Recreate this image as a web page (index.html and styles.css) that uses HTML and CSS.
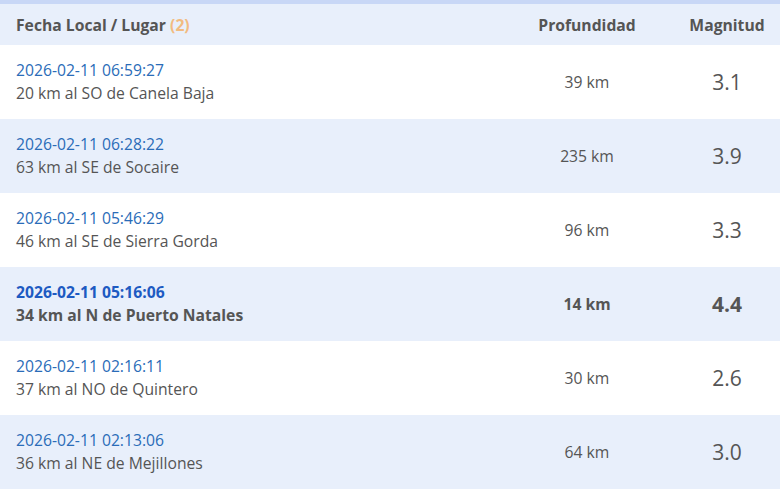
FILE: index.html
```html
<!DOCTYPE html>
<html lang="es">
<head>
    <meta charset="UTF-8">
    <meta name="viewport" content="width=device-width, initial-scale=1.0">
    <title>Sismos</title>
    <link rel="stylesheet" href="styles.css">
</head>
<body>
    <table class="sismos">
        <thead>
            <tr>
                <th class="lugar">Fecha Local / Lugar <span class="cuenta">(2)</span></th>
                <th class="prof">Profundidad</th>
                <th class="mag">Magnitud</th>
            </tr>
        </thead>
        <tbody>
            <tr>
                <td class="lugar"><a class="fecha">2026-02-11 06:59:27</a><br>20 km al SO de Canela Baja</td>
                <td class="prof">39 km</td>
                <td class="mag">3.1</td>
            </tr>
            <tr>
                <td class="lugar"><a class="fecha">2026-02-11 06:28:22</a><br>63 km al SE de Socaire</td>
                <td class="prof">235 km</td>
                <td class="mag">3.9</td>
            </tr>
            <tr>
                <td class="lugar"><a class="fecha">2026-02-11 05:46:29</a><br>46 km al SE de Sierra Gorda</td>
                <td class="prof">96 km</td>
                <td class="mag">3.3</td>
            </tr>
            <tr class="destacado">
                <td class="lugar"><a class="fecha">2026-02-11 05:16:06</a><br>34 km al N de Puerto Natales</td>
                <td class="prof">14 km</td>
                <td class="mag">4.4</td>
            </tr>
            <tr>
                <td class="lugar"><a class="fecha">2026-02-11 02:16:11</a><br>37 km al NO de Quintero</td>
                <td class="prof">30 km</td>
                <td class="mag">2.6</td>
            </tr>
            <tr>
                <td class="lugar"><a class="fecha">2026-02-11 02:13:06</a><br>36 km al NE de Mejillones</td>
                <td class="prof">64 km</td>
                <td class="mag">3.0</td>
            </tr>
        </tbody>
    </table>
</body>
</html>
```

FILE: styles.css
```css
body{
    margin: 0;
    padding: 0;
    background-color: white;
    font: normal 15.7px "Open Sans", "Liberation Sans", sans-serif;
    color: #555;
}
table.sismos{
    width: 100%;
    border-collapse: collapse;
    border-top: 4px solid #c8d7f6;
}
th, td{
    padding: 0;
    text-align: center;
}
thead th{
    background-color: #e8effb;
    font-weight: bold;
    height: 41px;
    color: #555;
}
tbody td{
    height: 74px;
    line-height: 23px;
}
tbody tr:nth-child(even){
    background-color: #e8effb;
}
.lugar{
    text-align: left;
    padding-left: 16px;
}
.prof{
    width: 174px;
}
.mag{
    width: 106px;
}
td.mag{
    font-size: 21px;
}
.cuenta{
    color: #f2bb80;
}
.fecha{
    color: #2a6cb8;
}
tr.destacado td{
    font-weight: bold;
}
tr.destacado .fecha{
    color: #1d5ac2;
}
```
